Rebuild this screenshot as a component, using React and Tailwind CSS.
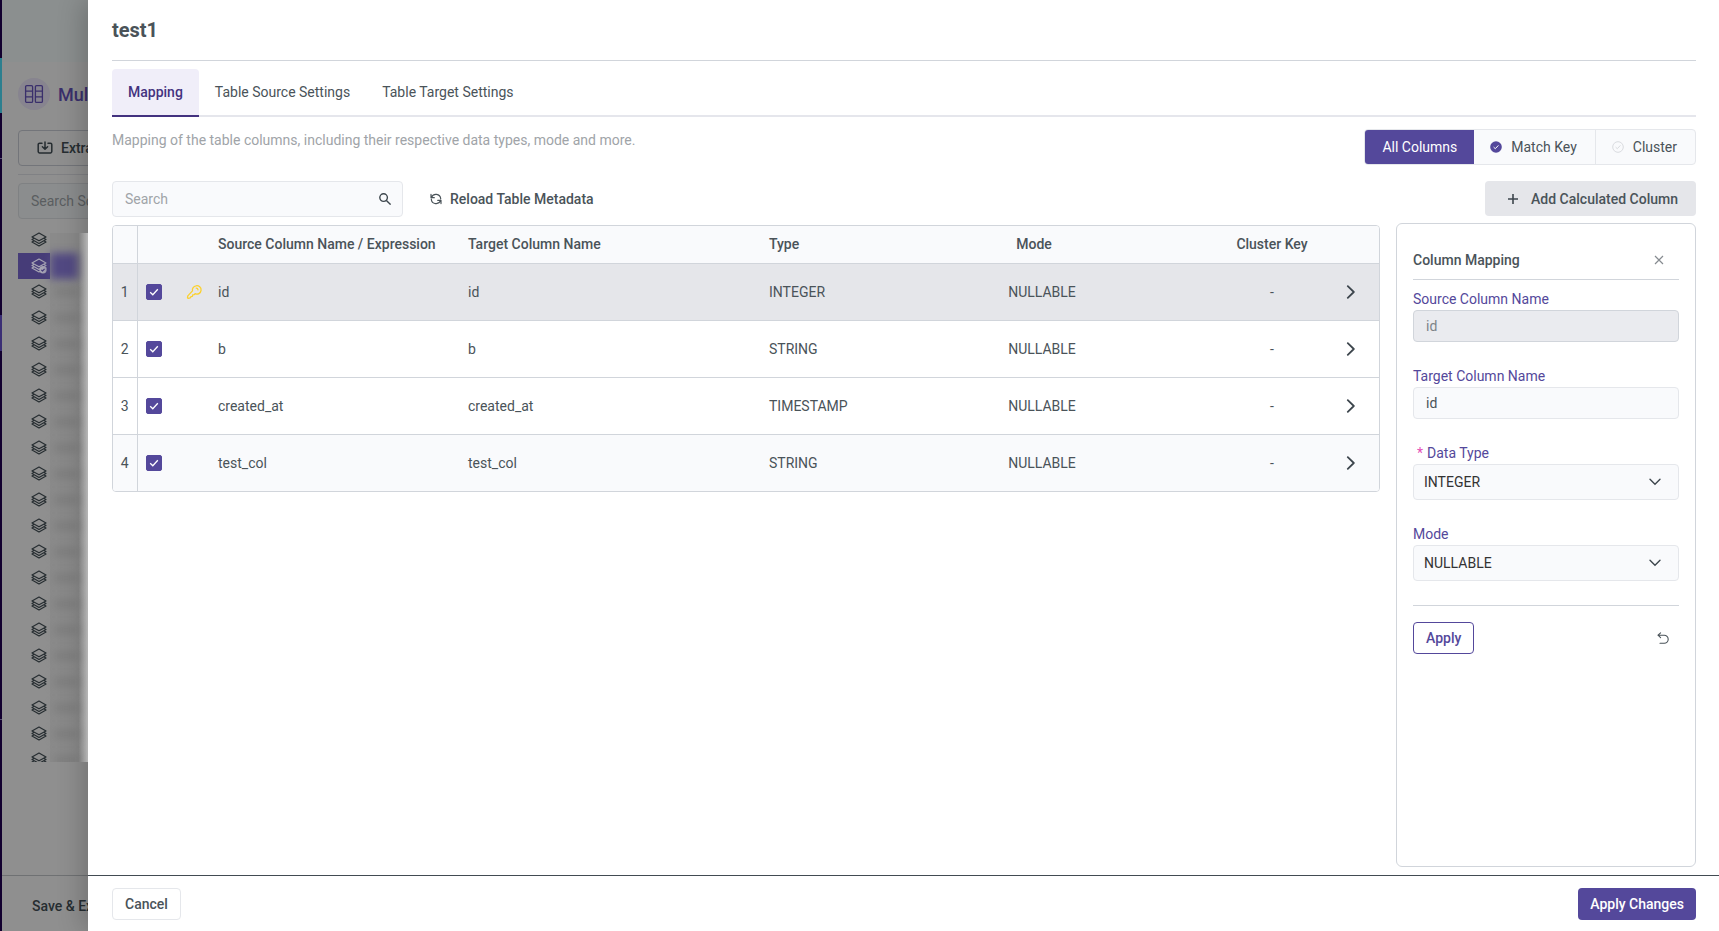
import React, { useState } from 'react'

const columns = [
  { name: 'id', target: 'id', type: 'INTEGER', mode: 'NULLABLE', key: true, bg: 'bg-[#e5e6ea]' },
  { name: 'b', target: 'b', type: 'STRING', mode: 'NULLABLE', bg: 'bg-white' },
  { name: 'created_at', target: 'created_at', type: 'TIMESTAMP', mode: 'NULLABLE', bg: 'bg-white' },
  { name: 'test_col', target: 'test_col', type: 'STRING', mode: 'NULLABLE', bg: 'bg-[#f9fafc]' },
]

const sources = Array.from({ length: 21 }, (_, i) => i)

const LayersIcon = ({ selected }) => (
  <svg viewBox="0 0 16 16" className="size-4 shrink-0" fill="none" stroke="currentColor" strokeWidth="1.2" strokeLinejoin="round">
    <path d="M8 1 15 4.9 8 8.8 1 4.9Z" />
    <path d="M3.2 6.2 1 7.5l7 3.9 7-3.9-2.2-1.3M3.2 8.8 1 10.1 8 14l7-3.9-2.2-1.3" />
    {selected && (
      <>
        <circle cx="12" cy="11.8" r="3.7" fill="currentColor" stroke="none" />
        <path d="m10.3 11.9 1.2 1.1 2.1-2.1" stroke="#463c78" />
      </>
    )}
  </svg>
)

const KeyIcon = () => (
  <svg viewBox="0 0 16 16" className="size-4" fill="none" stroke="#fbd12f" strokeWidth="1.3" strokeLinecap="round" strokeLinejoin="round">
    <path d="M10 1.8a4.2 4.2 0 1 1-.9 7.9l-1 1-1.4.2-.3 1.4-1.4.3-.8 1.2-2 .6-.7-.6.3-1.9 4.7-5A4.2 4.2 0 0 1 10 1.8Z" />
    <path d="M10.2 4.1c1 0 1.7.8 1.8 1.8" />
  </svg>
)

const ChevronDown = () => (
  <svg viewBox="0 0 12 12" className="pointer-events-none absolute right-[18px] top-3 size-3" fill="none" stroke="#3d464d" strokeWidth="1.4" strokeLinecap="round">
    <path d="m1 3.2 5 5 5-5" />
  </svg>
)

const Sidebar = () => (
  <div className="flex w-[88px] shrink-0 overflow-hidden bg-[#8f8f8f]">
    <div className="flex w-[2px] shrink-0 flex-col bg-[#12002f]">
      <div className="mt-[58px] h-[55px] bg-[#2c7f8f]"></div>
      <div className="mt-[45px] h-px bg-[#5b5277]"></div>
      <div className="mt-[156px] h-9 bg-[#3b2f75]"></div>
      <div className="mt-[368px] h-px bg-[#5b5277]"></div>
    </div>
    <div className="flex min-w-0 flex-1 flex-col whitespace-nowrap">
      <div className="h-[62px] shrink-0 bg-[#8b8f8f]"></div>
      <div className="flex flex-col pl-4">
        <div className="mt-4 flex h-8 items-center gap-2">
          <div className="flex size-8 shrink-0 items-center justify-center rounded-full bg-[#87848f]">
            <svg viewBox="0 0 20 20" className="size-5" fill="none" stroke="#3a2f6c" strokeWidth="1.3">
              <rect x="1.6" y="1.6" width="7" height="16.8" rx="1.2" />
              <rect x="11.4" y="1.6" width="7" height="16.8" rx="1.2" />
              <path d="M1.6 7.2h7M1.6 12.8h7M11.4 7.2h7M11.4 12.8h7" />
            </svg>
          </div>
          <h2 className="pt-0.5 text-lg font-medium text-[#3a2f6c]">Multi</h2>
        </div>
        <button className="mt-5 flex h-9 w-40 items-center gap-2 rounded border border-[#73757a] pl-[18px] font-medium text-[#262d31]">
          <svg viewBox="0 0 16 16" className="size-4" fill="none" stroke="currentColor" strokeWidth="1.5" strokeLinecap="round" strokeLinejoin="round">
            <path d="M5 3.2H2.6a1.4 1.4 0 0 0-1.4 1.4v7a1.4 1.4 0 0 0 1.4 1.4h10.8a1.4 1.4 0 0 0 1.4-1.4v-7a1.4 1.4 0 0 0-1.4-1.4H11M8 2v7M5.4 6.8 8 9.3l2.6-2.5" />
          </svg>
          Extraction
        </button>
        <div className="mt-2 h-px bg-[#808184]"></div>
        <input aria-label="Search Sources" placeholder="Search Sources" className="mt-2 h-9 w-40 rounded border border-[#7f8183] bg-[#8b8d8e] px-3 placeholder:text-[#5a5d60]" />
        <ul className="mt-2 h-[535px] overflow-hidden">
          {sources.map((i) => (
            <li key={i} className={i === 1 ? 'flex h-[26px] items-center bg-[#463c78] pl-[13px] text-[#a9a7b5]' : 'flex h-[26px] items-center pl-[13px] text-[#262d31]'}>
              <LayersIcon selected={i === 1} />
              <div className={i === 0 ? 'ml-[3px] h-5 flex-1 self-end bg-linear-to-r from-[#8a8a8a] from-75% to-[#d4d4d4]' : 'ml-[3px] flex h-[26px] flex-1 items-center bg-linear-to-r from-[#8a8a8a] from-75% to-[#d4d4d4]'}>
                {i > 0 && <div className={i === 1 ? 'h-[26px] w-7 bg-[#524983] blur-xs' : 'ml-1 h-2 w-6 bg-[#7d7d7d] blur-xs'}></div>}
              </div>
            </li>
          ))}
        </ul>
      </div>
      <div className="mt-auto flex h-14 shrink-0 items-center border-t border-[#6f7173] pl-[30px] pt-1 font-medium text-[#262d31]">
        <button>Save &amp; Exit</button>
      </div>
    </div>
  </div>
)

const ColumnPanel = () => (
  <aside className="mt-[7px] flex flex-1 flex-col rounded-md border border-[#d1d5db] px-4">
    <div className="mt-4 flex h-10 items-center justify-between border-b border-[#d1d5db] pr-[15px]">
      <h3 className="font-medium">Column Mapping</h3>
      <button aria-label="Close">
        <svg viewBox="0 0 10 10" className="size-[10px]" stroke="#868b90" strokeWidth="1.2">
          <path d="m1 1 8 8M9 1 1 9" />
        </svg>
      </button>
    </div>
    <label htmlFor="source" className="mt-[9px] text-[#54489b]">Source Column Name</label>
    <input id="source" disabled defaultValue="id" className="mt-px h-8 rounded border border-[#d1d5db] bg-[#eaebef] px-3 text-[#7d8388]" />
    <label htmlFor="target" className="mt-6 text-[#54489b]">Target Column Name</label>
    <input id="target" defaultValue="id" className="mt-px h-8 rounded border border-[#e5e7eb] bg-[#f9fafc] px-3" />
    <label htmlFor="datatype" className="mt-6 text-[#54489b]"><span className="mx-1 text-[#e550b8]">*</span>Data Type</label>
    <div className="relative mt-px">
      <select id="datatype" className="h-9 w-full appearance-none rounded border border-[#e5e7eb] bg-[#f9fafc] px-[10px] text-[#333]">
        <option>INTEGER</option>
        <option>STRING</option>
        <option>TIMESTAMP</option>
      </select>
      <ChevronDown />
    </div>
    <label htmlFor="mode" className="mt-6 text-[#54489b]">Mode</label>
    <div className="relative mt-px">
      <select id="mode" className="h-9 w-full appearance-none rounded border border-[#e5e7eb] bg-[#f9fafc] px-[10px] text-[#333]">
        <option>NULLABLE</option>
        <option>REQUIRED</option>
      </select>
      <ChevronDown />
    </div>
    <div className="mt-6 flex items-center justify-between border-t border-[#d1d5db] pr-[10px] pt-4">
      <button className="h-8 rounded border border-[#54489b] px-3 font-medium text-[#54489b]">Apply</button>
      <button aria-label="Undo">
        <svg viewBox="0 0 12 12" className="size-3" fill="none" stroke="#4a5359" strokeWidth="1.1" strokeLinecap="round" strokeLinejoin="round">
          <path d="M3.6.8 1 3.2l2.6 2.4M1 3.2h6.2a4 4 0 0 1 0 8H3" />
        </svg>
      </button>
    </div>
  </aside>
)

const App = () => {
  const [checked, setChecked] = useState([true, true, true, true])
  const toggle = (i) => setChecked(checked.map((c, j) => (j === i ? !c : c)))

  return (
    <div className="flex h-screen overflow-hidden font-[Roboto,sans-serif] text-sm text-[#4a5359]">
      <Sidebar />
      <div className="z-10 flex min-w-0 flex-1 flex-col bg-white shadow-[-6px_0_24px_rgba(0,0,0,0.2)]">
        <div className="flex min-h-0 flex-1 flex-col pb-2 pl-6 pr-[23px]">
          <h1 className="flex h-[61px] shrink-0 items-center border-b border-[#d1d5db] text-xl font-bold">test1</h1>
          <nav className="mt-2 flex h-12 shrink-0 border-b-2 border-[#e5e6ec]">
            <button className="-mb-0.5 rounded-t border-b-2 border-[#43327f] bg-[#f0eef9] px-4 font-medium text-[#43327f]">Mapping</button>
            <button className="px-4">Table Source Settings</button>
            <button className="px-4">Table Target Settings</button>
          </nav>
          <div className="mt-3 flex h-9 shrink-0 justify-between">
            <p className="pt-px text-[#a0a4a8]">Mapping of the table columns, including their respective data types, mode and more.</p>
            <div className="flex overflow-hidden rounded border border-[#e5e7eb] bg-[#f9fafc]">
              <button className="bg-[#54489b] px-[17px] text-white">All Columns</button>
              <button className="flex items-center gap-[9px] border-r border-[#e5e7eb] pl-4 pr-[18px]">
                <svg viewBox="0 0 12 12" className="size-3" fill="none">
                  <circle cx="6" cy="6" r="5.8" fill="#54489b" />
                  <path d="m3.6 6.1 1.7 1.6 3.1-3.3" stroke="#fff" />
                </svg>
                Match Key
              </button>
              <button className="flex items-center gap-[9px] pl-4 pr-[18px]">
                <svg viewBox="0 0 12 12" className="size-3" fill="none" stroke="#d9dbdf">
                  <circle cx="6" cy="6" r="5.3" />
                  <path d="m3.6 6.1 1.7 1.6 3.1-3.3" />
                </svg>
                Cluster
              </button>
            </div>
          </div>

          <div className="mt-4 flex min-h-0 flex-1 gap-4">
            <div className="min-w-0 flex-1">
              <div className="flex">
                <div className="relative">
                  <input aria-label="Search" placeholder="Search" className="h-9 w-[291px] rounded border border-[#e5e7eb] bg-[#f9fafc] px-3 placeholder:text-[#a0a4a8]" />
                  <svg viewBox="0 0 12 12" className="absolute right-3 top-3 size-3" fill="none" stroke="#3d464d" strokeWidth="1.4">
                    <circle cx="4.6" cy="4.6" r="3.8" />
                    <path d="m7.4 7.4 4.2 4.2" />
                  </svg>
                </div>
                <button className="ml-[27px] flex items-center gap-2 font-medium">
                  <svg viewBox="0 0 12 12" className="size-3" fill="none" stroke="currentColor" strokeWidth="1.2" strokeLinecap="round" strokeLinejoin="round">
                    <path d="M1.4 4.6a4.8 4.8 0 0 1 9.3 1.2M1 1.4v3.3h3.3M10.6 7.4a4.8 4.8 0 0 1-9.3-1.2M11 10.6V7.3H7.7" />
                  </svg>
                  Reload Table Metadata
                </button>
              </div>
              <div className="mt-2 overflow-hidden rounded border border-[#d1d5db]">
                <table className="w-full table-fixed text-left">
                  <thead className="bg-[#f9fafc]">
                    <tr className="h-[37px] border-b border-[#d1d5db]">
                      <th className="w-6 border-r border-[#d1d5db]"></th>
                      <th className="w-[49px]"></th>
                      <th className="w-8"></th>
                      <th className="w-[250px] font-medium">Source Column Name / Expression</th>
                      <th className="w-[301px] font-medium">Target Column Name</th>
                      <th className="w-[206px] font-medium">Type</th>
                      <th className="w-[134px] pr-4 text-center font-medium">Mode</th>
                      <th className="pl-[114px] text-center font-medium">Cluster Key</th>
                      <th className="w-[58px]"></th>
                    </tr>
                  </thead>
                  <tbody>
                    {columns.map((col, i) => (
                      <tr key={col.name} className={`h-[57px] border-b border-[#d1d5db] last:border-b-0 ${col.bg}`}>
                        <td className="border-r border-[#d1d5db] text-center">{i + 1}</td>
                        <td className="pl-2">
                          <label className="relative block size-4">
                            <input type="checkbox" aria-label={col.name} checked={checked[i]} onChange={() => toggle(i)} className="peer block size-4 appearance-none rounded-xs border border-[#54489b] bg-white checked:bg-[#54489b]" />
                            <svg viewBox="0 0 16 16" className="pointer-events-none absolute left-0 top-0 hidden size-4 peer-checked:block" fill="none" stroke="#fff" strokeWidth="1.3">
                              <path d="m4.2 8.2 2.6 2.5 5-5.4" />
                            </svg>
                          </label>
                        </td>
                        <td>{col.key && <KeyIcon />}</td>
                        <td>{col.name}</td>
                        <td>{col.target}</td>
                        <td>{col.type}</td>
                        <td className="text-center">{col.mode}</td>
                        <td className="pl-[114px] text-center">-</td>
                        <td className="pl-[25px]">
                          <button aria-label={`Open ${col.name}`} className="block">
                            <svg viewBox="0 0 10 14" className="h-[14px] w-[10px]" fill="none" stroke="#3d464d" strokeWidth="1.8" strokeLinecap="round" strokeLinejoin="round">
                              <path d="m1.8 1.2 6 5.8-6 5.8" />
                            </svg>
                          </button>
                        </td>
                      </tr>
                    ))}
                  </tbody>
                </table>
              </div>
            </div>

            <div className="flex w-[300px] shrink-0 flex-col">
              <button className="flex h-[35px] items-center gap-[13px] self-end rounded bg-[#e5e6ea] pl-[23px] pr-[18px] font-medium">
                <svg viewBox="0 0 10 10" className="size-[10px]" stroke="#3d464d" strokeWidth="1.6">
                  <path d="M5 0v10M0 5h10" />
                </svg>
                Add Calculated Column
              </button>
              <ColumnPanel />
            </div>
          </div>
        </div>
        <footer className="flex h-14 shrink-0 items-start justify-between border-t border-[#424b52] pl-6 pr-[23px] pt-3">
          <button className="h-8 rounded border border-[#e5e7eb] px-3 font-medium">Cancel</button>
          <button className="h-8 rounded bg-[#54489b] px-3 font-medium text-white">Apply Changes</button>
        </footer>
      </div>
    </div>
  )
}

export default App
